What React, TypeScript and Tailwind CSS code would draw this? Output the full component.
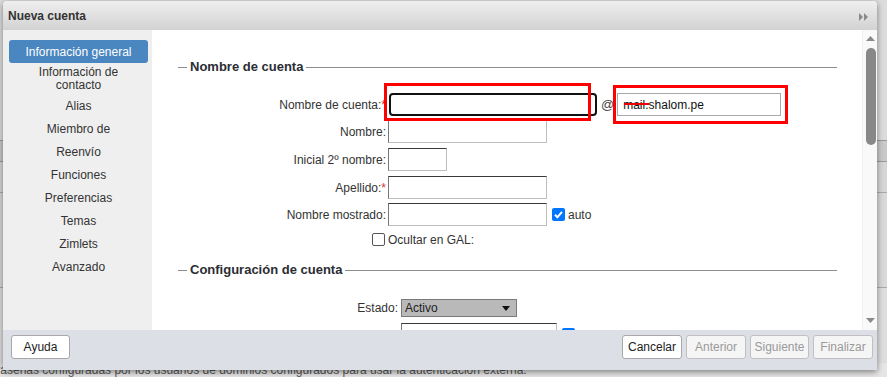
import React from 'react'

const navItems = ['Alias', 'Miembro de', 'Reenvío', 'Funciones', 'Preferencias', 'Temas', 'Zimlets', 'Avanzado']

function Legend({ title }: { title: string }) {
  return (
    <div className='flex items-center h-[16px]'>
      <div className='w-[9px] h-px bg-[#8c8c8c]'></div>
      <span className='px-[3px] text-[13px] font-bold text-[#2b2d33] leading-[16px]'>{title}</span>
      <div className='flex-1 h-px bg-[#8c8c8c]'></div>
    </div>
  )
}

function Field({ w }: { w: string }) {
  return (
    <div className={`${w} h-[23px] bg-white border border-t-[#3a3a3a] border-l-[#777] border-r-[#bdbdbd] border-b-[#bdbdbd]`}></div>
  )
}

function Checked() {
  return (
    <div className='w-[13px] h-[13px] rounded-[2px] bg-[#0075ff] flex items-center justify-center'>
      <svg width='11' height='11' viewBox='0 0 11 11'>
        <path d='M2 5.8 L4.4 8.2 L9 2.8' fill='none' stroke='white' strokeWidth='2' />
      </svg>
    </div>
  )
}

export default function App() {
  return (
    <div className='relative w-[887px] h-[377px] overflow-hidden bg-[#e4e4e4]' style={{ fontFamily: '"Liberation Sans", Arial, sans-serif' }}>

      {/* page behind the dialog */}
      <div className='absolute inset-0 flex flex-col'>
        <div className='h-[140px] bg-[#dcdcdc]'></div>
        <div className='h-[22px] bg-[#c9c9c9] border-y border-[#9a9a9a]'></div>
        <div className='h-[32px] bg-[#d6d6d6] border-b border-[#aaa]'></div>
        <div className='h-[95px] bg-[#d9d9d9] border-b border-[#aaa]'></div>
        <div className='h-[75px] bg-[#dedede]'></div>
        <div className='flex-1 bg-[#e6e6e6]'>
          <p className='ml-[-29px] text-[12px] leading-[14px] text-[#555] whitespace-nowrap'>Contraseñas configuradas por los usuarios de dominios configurados para usar la autenticación externa.</p>
        </div>
      </div>

      {/* dialog window */}
      <div className='absolute left-[3px] top-[1px] w-[874px] h-[369px] flex flex-col rounded-t-[4px] overflow-hidden shadow-[0_2px_6px_rgba(0,0,0,0.45)] bg-[#dcdfe5]'>
        <div className='h-[29px] shrink-0 flex items-center justify-between pl-[5px] pr-[8px] bg-gradient-to-b from-[#efefef] to-[#d2d2d2]'>
          <span className='text-[12px] font-bold text-[#333]'>Nueva cuenta</span>
          <svg width='10' height='8' viewBox='0 0 10 8' className='mt-[3px]'>
            <path d='M0 0 L4 4 L0 8 Z M5 0 L9 4 L5 8 Z' fill='#8a8a8a' />
          </svg>
        </div>

        <div className='h-[300px] shrink-0 flex'>
          <div className='w-[149px] shrink-0 bg-[#efefef] flex flex-col items-center text-[12px] text-[#333] pt-[10px] pl-[2px]'>
            <div className='w-[139px] h-[23px] rounded-[3px] bg-[#4a86c0] text-white flex items-center justify-center'>Información general</div>
            <div className='h-[31px] flex flex-col items-center justify-center leading-[13px] text-center'>
              <span>Información de</span>
              <span>contacto</span>
            </div>
            {navItems.map((n) => (
              <div key={n} className='h-[23px] flex items-center'>{n}</div>
            ))}
          </div>

          <div className='relative flex-1 bg-white overflow-hidden pt-[29px] pl-[26px] pr-[25px] text-[12px] text-[#333]'>
            <Legend title='Nombre de cuenta' />

            <div className='mt-[18px] flex items-center'>
              <div className='w-[208px] text-right'>Nombre de cuenta:<span className='text-[#d33]'>*</span></div>
              <div className='ml-[3px] w-[208px] h-[23px] rounded-[4px] border-[2px] border-[#111]'></div>
              <span className='ml-[4px] text-[13px] text-[#444]'>@</span>
              <div className='relative ml-[3px] w-[164px] h-[23px] border border-[#a9a9a9] flex items-center pl-[5px] text-[#111]'>
                mail.shalom.pe
                <div className='absolute left-[6px] top-[9px] w-[25px] h-[2px] bg-[#e00]'></div>
              </div>
            </div>

            <div className='mt-[4px] flex items-center'>
              <div className='w-[208px] text-right'>Nombre:</div>
              <div className='ml-[2px]'><Field w='w-[159px]' /></div>
            </div>
            <div className='mt-[5px] flex items-center'>
              <div className='w-[208px] text-right'>Inicial 2º nombre:</div>
              <div className='ml-[2px]'><Field w='w-[59px]' /></div>
            </div>
            <div className='mt-[5px] flex items-center'>
              <div className='w-[208px] text-right'>Apellido:<span className='text-[#d33]'>*</span></div>
              <div className='ml-[2px]'><Field w='w-[159px]' /></div>
            </div>
            <div className='mt-[4px] flex items-center'>
              <div className='w-[208px] text-right'>Nombre mostrado:</div>
              <div className='ml-[2px]'><Field w='w-[159px]' /></div>
              <div className='ml-[5px]'><Checked /></div>
              <span className='ml-[3px]'>auto</span>
            </div>
            <div className='mt-[7px] flex items-center h-[13px]'>
              <div className='w-[207px] flex justify-end'>
                <div className='w-[13px] h-[13px] rounded-[2px] border border-[#555] bg-white'></div>
              </div>
              <span className='ml-[3px]'>Ocultar en GAL:</span>
            </div>

            <div className='mt-[16px]'>
              <Legend title='Configuración de cuenta' />
            </div>

            <div className='mt-[21px] flex items-center'>
              <div className='w-[220px] text-right'>Estado:</div>
              <div className='ml-[3px] w-[116px] h-[18px] bg-[#b9b9b9] border border-[#7a7a7a] flex items-center justify-between pl-[3px] pr-[6px] text-[#222]'>
                Activo
                <svg width='8' height='5' viewBox='0 0 8 5'><path d='M0 0 L8 0 L4 5 Z' fill='#111' /></svg>
              </div>
            </div>
            <div className='mt-[6px] flex items-start'>
              <div className='ml-[223px]'><Field w='w-[156px]' /></div>
              <div className='ml-[5px] mt-[5px]'><Checked /></div>
            </div>

            <div className='absolute left-[232px] top-[53px] w-[207px] h-[38px] border-[3px] border-[#f00]'></div>
            <div className='absolute left-[461px] top-[55px] w-[175px] h-[39px] border-[3px] border-[#f00]'></div>
          </div>

          <div className='relative w-[15px] shrink-0 bg-[#f9f9f9] border-l border-[#f0f0f0]'>
            <svg width='9' height='5' viewBox='0 0 9 5' className='absolute left-[3px] top-[6px]'><path d='M0 5 L4.5 0 L9 5 Z' fill='#8a8a8a' /></svg>
            <div className='absolute left-[3px] top-[18px] w-[10px] h-[97px] rounded-full bg-[#888]'></div>
            <svg width='9' height='5' viewBox='0 0 9 5' className='absolute left-[3px] top-[288px]'><path d='M0 0 L9 0 L4.5 5 Z' fill='#8a8a8a' /></svg>
          </div>
        </div>

        <div className='flex-1 flex items-start justify-between pt-[5px] pl-[8px] pr-[4px] bg-[#dcdfe5] text-[12px]'>
          <button className='w-[59px] h-[24px] bg-white border border-[#a8a8a8] rounded-[3px] text-[#222]'>Ayuda</button>
          <div className='flex gap-[4px]'>
            <button className='w-[60px] h-[24px] bg-white border border-[#a8a8a8] rounded-[3px] text-[#222]'>Cancelar</button>
            <button className='w-[60px] h-[24px] bg-[#f5f5f5] border border-[#c0c0c0] rounded-[3px] text-[#9a9a9a]'>Anterior</button>
            <button className='w-[59px] h-[24px] bg-[#f5f5f5] border border-[#c0c0c0] rounded-[3px] text-[#9a9a9a]'>Siguiente</button>
            <button className='w-[60px] h-[24px] bg-[#f5f5f5] border border-[#c0c0c0] rounded-[3px] text-[#9a9a9a]'>Finalizar</button>
          </div>
        </div>
      </div>
    </div>
  )
}
